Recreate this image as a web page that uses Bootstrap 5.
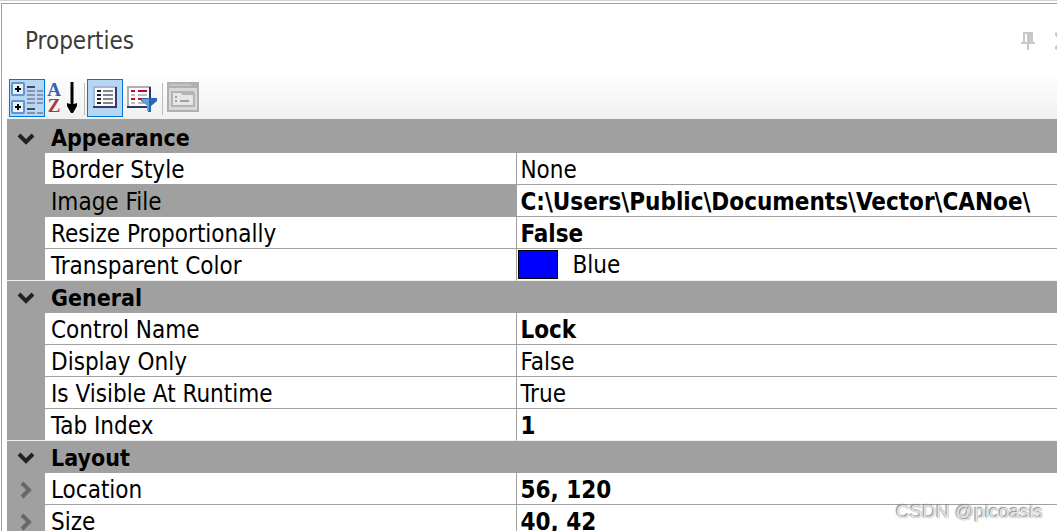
<!DOCTYPE html>
<html lang="en">
<head>
<meta charset="utf-8">
<meta name="viewport" content="width=device-width, initial-scale=1">
<title>Properties</title>
<link href="https://cdn.jsdelivr.net/npm/bootstrap@5.3.0/dist/css/bootstrap.min.css" rel="stylesheet">
<style>
body { font-family: Tahoma, "DejaVu Sans Condensed", "DejaVu Sans", sans-serif; font-stretch: condensed; font-size: 24px; color: #000; border-top: 1px solid #d2d2d2; }
.dock { border-top: 1px solid #a0a0a0; border-left: 1px solid #a0a0a0; margin: 2px 0 0 1px; padding-left: 5px; }
.dock-head { height: 74px; padding-left: 18px; margin-right: -12px; color: #3b3b3b; }
.dock-head h1 { font-size: 24px; line-height: 32px; }
.dock-head .btn { padding: 0; border: 0; line-height: 1; border-radius: 0; }
.tools { height: 41px; padding: 1px 2px; background: linear-gradient(#fdfdfd, #f0f0f0); }
.tool { width: 36px; height: 38px; padding: 0; border: 0; border-radius: 0; background: none; line-height: 1; }
.tool svg { display: block; }
.tool.active { background: #b5d7f3; box-shadow: inset 0 0 0 1px #0078d7; }
.rule { width: 1px; height: 32px; margin: 4px 2px 0 3px; background: #bdbdbd; }
.props { table-layout: fixed; width: 100%; border-collapse: separate; border-spacing: 0; line-height: 28px; white-space: nowrap; }
.props col.gutter { width: 38px; }
.props col.label { width: 44.9%; }
.props th, .props td { height: 32px; padding: 3px 0 0 6px; font-weight: 400; overflow: hidden; border-bottom: 1px solid #a0a0a0; }
.props td:last-child { border-left: 1px solid #a0a0a0; padding-left: 3px; }
.props .edge, .props .group th, .props .picked th { background: #a0a0a0; }
.props .edge { padding: 0; text-align: center; border-color: #a0a0a0; line-height: 1; }
.props .group th { font-weight: 700; font-size: 23px; }
.props tbody:first-of-type .group > * { height: 34px; padding-top: 4px; }
.props tr.last > * { border-bottom-color: #f0f0f0; }
.props .b { font-weight: 700; }
.expander { border: 0; padding: 0; background: none; display: inline-block; line-height: 1; vertical-align: middle; }
.expander svg { display: block; }
.swatch { width: 40px; height: 29px; border: 1px solid #000; background: #00f; margin-left: -2px; margin-right: 14px; }
.watermark { position: absolute; right: 14px; bottom: 7px; font: 19px/24px "Liberation Sans", sans-serif; color: #e6e6e6; text-shadow: -1px -1px 1px #8a8a8a, 0 0 1px #8a8a8a; }
</style>
</head>
<body class="vh-100 overflow-hidden position-relative bg-white">
<main class="dock">
  <header class="dock-head d-flex align-items-center">
    <h1 class="fw-normal m-0 flex-grow-1">Properties</h1>
    <button class="btn me-3" type="button" aria-label="Pin"><svg class="d-block" width="18" height="18" viewBox="0 0 18 18" fill="#c8c8c8"><path d="M2 0h10v10h2v2H8v6H6v-6H0v-2h2zM4 2v8h2V2z" fill-rule="evenodd"/></svg></button>
    <button class="btn" type="button" aria-label="Close"><svg class="d-block" width="14" height="18" viewBox="0 0 14 18" fill="none" stroke="#c8c8c8" stroke-width="3"><path d="M0 1l14 16M14 1L0 17"/></svg></button>
  </header>
  <div class="tools d-flex" role="toolbar" aria-label="View">
    <button class="tool active" type="button" aria-label="Categorized"><svg width="36" height="38"><g fill="#e8f0fa" stroke="#6094d2" stroke-width="2"><rect x="3" y="4" width="12" height="12" rx="1"/><rect x="3" y="22" width="12" height="12" rx="1"/></g><path d="M6 10h6M9 7v6M6 28h6M9 25v6" stroke="#000" stroke-width="2"/><path d="M18 8h8M18 30h8" stroke="#444a50" stroke-width="2"/><path d="M18 12h8M18 16h8M18 20h8M18 24h8M18 34h8M28 12h6M28 16h6M28 20h6M28 24h6M28 34h6" stroke="#8494a8" stroke-width="2"/><path d="M22 12h4M22 20h4M22 24h4M31 16h3M31 24h3" stroke="#a08cb8" stroke-width="2"/></svg></button>
    <button class="tool" type="button" aria-label="Alphabetical"><svg width="36" height="38" font-family="Liberation Serif, serif" font-weight="700" font-size="19" text-anchor="middle"><text x="9" y="17" fill="#3560b4">A</text><text x="9" y="33" fill="#a83c40">Z</text><path d="M27 3v24" stroke="#000" stroke-width="3"/><path d="M22 24l3 1h4l3-1v3l-4 7h-2l-4-7z"/></svg></button>
    <span class="rule"></span>
    <button class="tool active" type="button" aria-label="Properties"><svg width="36" height="38"><path d="M6 7h24v22H6z" fill="#a9b6dc"/><path d="M8 9h20v18H8z" fill="#f8faff"/><path d="M6 28h23V8" fill="none" stroke="#35386c" stroke-width="2"/><path d="M10 12h4M10 16h4M10 20h4M10 24h4" stroke="#222" stroke-width="2"/><path d="M16 12h10M16 16h10M16 20h10M16 24h10" stroke="#858585" stroke-width="2"/></svg></button>
    <button class="tool" type="button" aria-label="Filter"><svg width="36" height="38"><path d="M4 7h24v22H4z" fill="#b0b0b0"/><path d="M6 9h20v18H6z" fill="#fff"/><path d="M4 28h23V8" fill="none" stroke="#303468" stroke-width="2"/><path d="M8 12h4M15 12h9M8 20h4M15 20h9" stroke="#c80030" stroke-width="2"/><path d="M8 16h4M15 16h9M8 24h4M15 24h6" stroke="#bcbcbc" stroke-width="2"/><path d="M18 19h16v3l-6 5v6h-3v-6l-7-5z" fill="#2c64b4"/><path d="M19 20h7v12h-2v-6l-5-4z" fill="#66a2d4"/></svg></button>
    <span class="rule"></span>
    <button class="tool" type="button" aria-label="Property pages" disabled><svg width="36" height="38"><path d="M2 3h32v30H2z" fill="#b0b0b0"/><path d="M4 9h28v22H4z" fill="#d8d8d8"/><path d="M4 5h22v2H4z" fill="#c4c4c4"/><path d="M7 27V13h9l2 2h11v12zM18 15v-2h10v3" fill="#e6e6e6" stroke="#b4b4b4" stroke-width="2"/><path d="M10 18h2M10 22h2M15 22h9" stroke="#a0a0a0" stroke-width="2"/></svg></button>
  </div>
  <table class="props">
    <colgroup><col class="gutter"><col class="label"><col></colgroup>
    <tbody>
      <tr class="group"><td class="edge"><button class="expander" type="button" aria-label="Collapse Appearance"><svg width="18" height="12" fill="none" stroke="#222" stroke-width="4"><path d="M2 2l7 7 7-7"/></svg></button></td><th colspan="2">Appearance</th></tr>
      <tr><td class="edge"></td><th scope="row">Border Style</th><td>None</td></tr>
      <tr class="picked"><td class="edge"></td><th scope="row">Image File</th><td class="b">C:\Users\Public\Documents\Vector\CANoe\</td></tr>
      <tr><td class="edge"></td><th scope="row">Resize Proportionally</th><td class="b">False</td></tr>
      <tr class="last"><td class="edge"></td><th scope="row">Transparent Color</th><td class="py-0"><div class="d-flex align-items-end"><span class="swatch"></span>Blue</div></td></tr>
    </tbody>
    <tbody>
      <tr class="group"><td class="edge"><button class="expander" type="button" aria-label="Collapse General"><svg width="18" height="12" fill="none" stroke="#222" stroke-width="4"><path d="M2 2l7 7 7-7"/></svg></button></td><th colspan="2">General</th></tr>
      <tr><td class="edge"></td><th scope="row">Control Name</th><td class="b">Lock</td></tr>
      <tr><td class="edge"></td><th scope="row">Display Only</th><td>False</td></tr>
      <tr><td class="edge"></td><th scope="row">Is Visible At Runtime</th><td>True</td></tr>
      <tr class="last"><td class="edge"></td><th scope="row">Tab Index</th><td class="b">1</td></tr>
    </tbody>
    <tbody>
      <tr class="group"><td class="edge"><button class="expander" type="button" aria-label="Collapse Layout"><svg width="18" height="12" fill="none" stroke="#222" stroke-width="4"><path d="M2 2l7 7 7-7"/></svg></button></td><th colspan="2">Layout</th></tr>
      <tr><td class="edge"><button class="expander" type="button" aria-label="Expand Location"><svg width="12" height="18" fill="none" stroke="#686868" stroke-width="4"><path d="M2 2l7 7-7 7"/></svg></button></td><th scope="row">Location</th><td class="b">56, 120</td></tr>
      <tr><td class="edge"><button class="expander" type="button" aria-label="Expand Size"><svg width="12" height="18" fill="none" stroke="#686868" stroke-width="4"><path d="M2 2l7 7-7 7"/></svg></button></td><th scope="row">Size</th><td class="b">40, 42</td></tr>
    </tbody>
  </table>
</main>
<span class="watermark">CSDN @picoasis</span>
<script src="https://cdn.jsdelivr.net/npm/bootstrap@5.3.0/dist/js/bootstrap.bundle.min.js"></script>
</body>
</html>
